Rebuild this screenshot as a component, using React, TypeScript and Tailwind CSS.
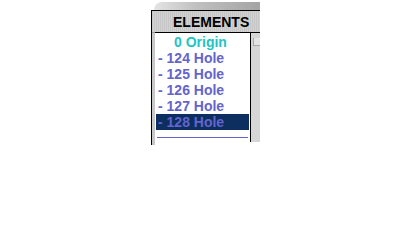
import React from 'react';

const holes = [124, 125, 126, 127, 128];

const App: React.FC = () => {
  const selected = 128;

  return (
    <div className="w-[400px] h-[250px] bg-white overflow-hidden font-['Liberation_Sans',Arial,sans-serif] font-bold text-[14px]">
      <div className="ml-[151px] w-[109px] flex flex-col">
        {/* tab shadow on top */}
        <div className="h-[10px] pl-[3px] pt-[2px]">
          <div className="h-[8px] rounded-tl-[10px] bg-[linear-gradient(90deg,#e4e4e4,#c0c0c0_40%,#a4a4a4)]" />
        </div>

        <div className="border-l border-t border-black flex flex-col">
          {/* header */}
          <div className="h-[21px] pl-[21px] leading-[21px] pt-[1px] text-black text-[14px] bg-[repeating-linear-gradient(90deg,#c6c6c6_0px,#c6c6c6_1px,#d2d2d2_1px,#d2d2d2_2px)]">
            ELEMENTS
          </div>

          <div className="flex h-[113px]">
            <div className="w-[3px] bg-[#c8c8c8] border-t border-[#9a9a9a]" />

            {/* list */}
            <div className="w-[96px] h-[110px] bg-white border-t border-r border-black px-[1px] pt-[1px] flex flex-col">
              <div className="h-[16px] leading-[16px] pl-[18px] text-[#1ec4c4]">0 Origin</div>
              {holes.map((n) => (
                <div
                  key={n}
                  className={
                    n === selected
                      ? 'h-[16px] leading-[16px] pl-[2px] bg-[#0c2f60] text-[#6464cc]'
                      : 'h-[16px] leading-[16px] pl-[2px] text-[#6464cc]'
                  }
                >
                  - {n} Hole
                </div>
              ))}
              <div className="mt-[7px] mx-[1px] h-px bg-[#6464cc]" />
            </div>

            {/* scroll column */}
            <div className="w-[9px] h-[110px] bg-[#d6d6d6] border-t border-black pt-[5px] pl-[2px]">
              <div className="w-[7px] h-[8px] bg-[#e4e4e4] border-l border-b border-[#a8a8a8]" />
            </div>
          </div>
        </div>
      </div>
    </div>
  );
};

export default App;
